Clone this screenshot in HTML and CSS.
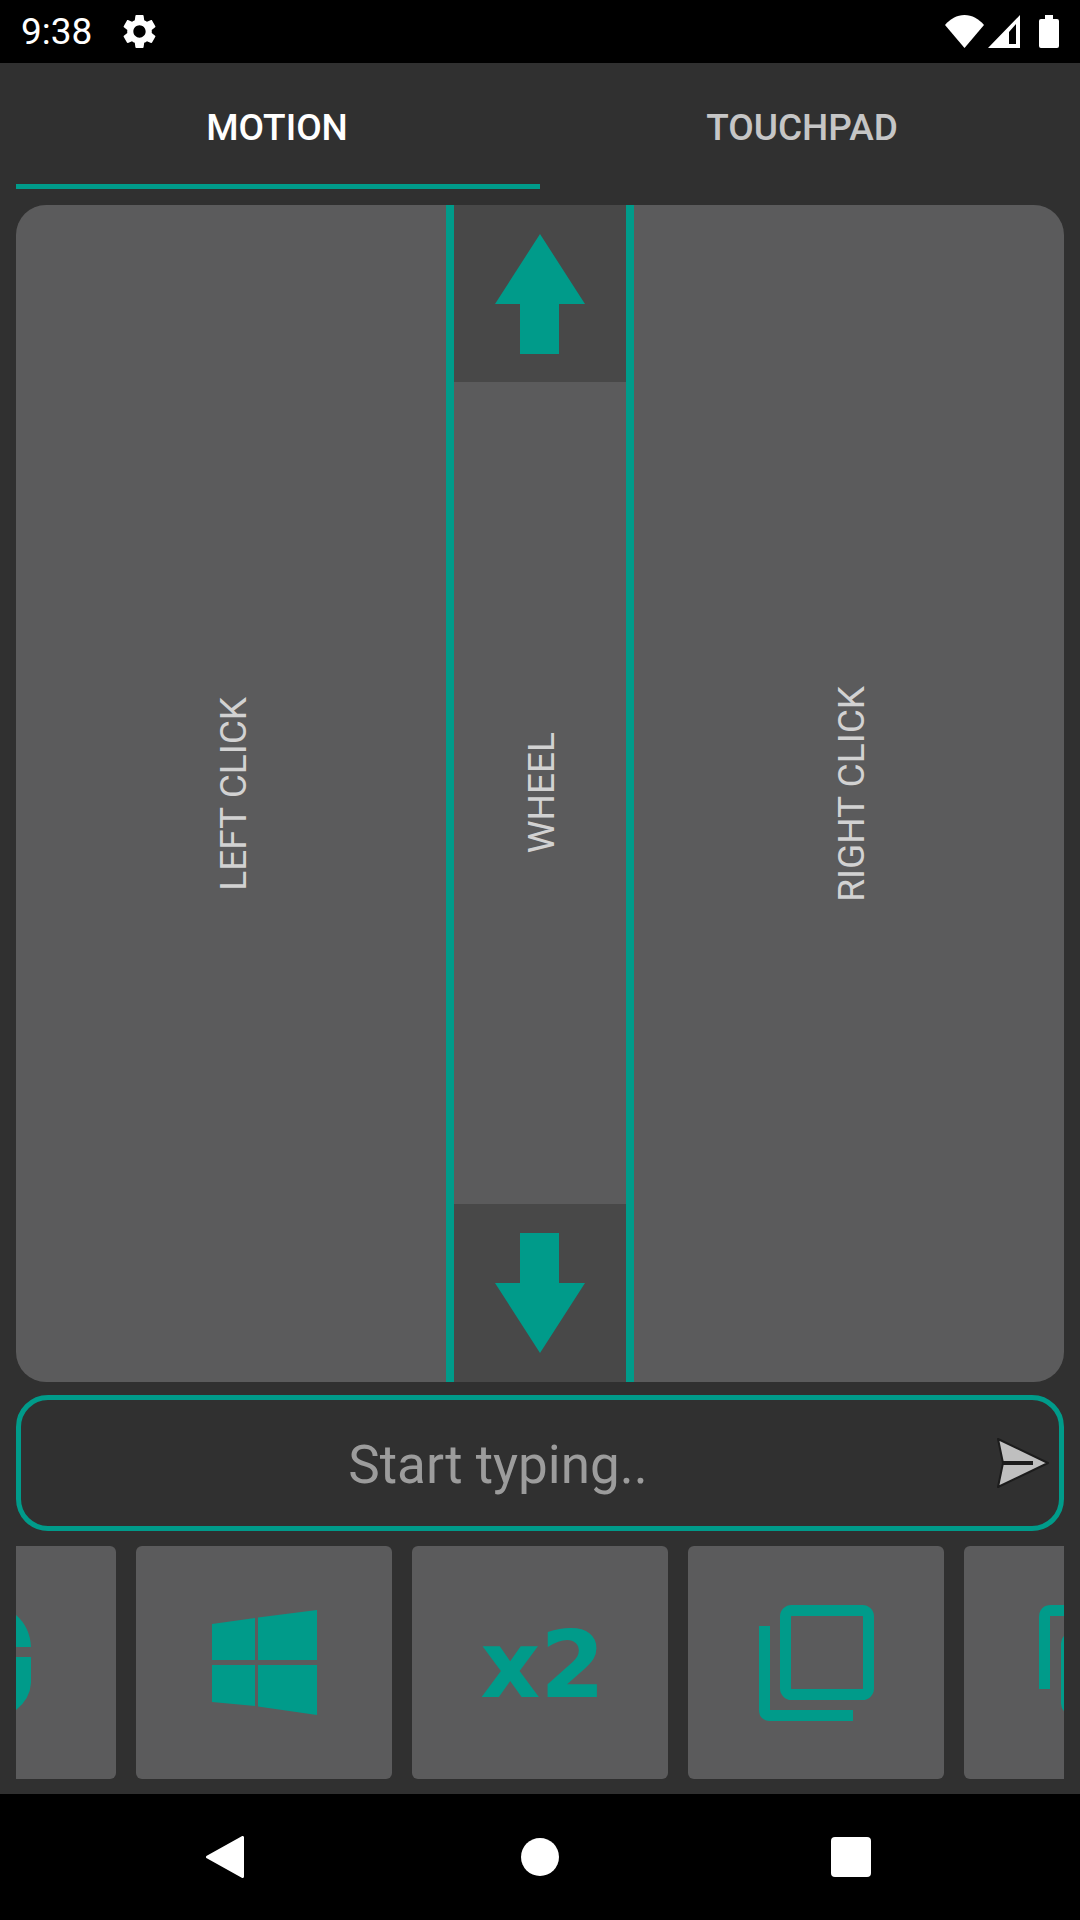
FILE: index.html
```html
<!DOCTYPE html>
<html lang="en">
<head>
  <meta charset="UTF-8" />
  <meta name="viewport" content="width=device-width, initial-scale=1.0" />
  <title>Remote Mouse</title>
  <link rel="stylesheet" href="styles.css">
</head>
<body>
  <header class="status-bar">
    <span class="clock">9:38</span>
    <svg class="gear" viewBox="0 0 24 24"><path fill="#fff" d="M19.14 12.94c.04-.3.06-.61.06-.94 0-.32-.02-.64-.07-.94l2.03-1.58c.18-.14.23-.41.12-.61l-1.92-3.32c-.12-.22-.37-.29-.59-.22l-2.39.96c-.5-.38-1.03-.7-1.62-.94l-.36-2.54c-.04-.24-.24-.41-.48-.41h-3.84c-.24 0-.43.17-.47.41l-.36 2.54c-.59.24-1.13.57-1.62.94l-2.39-.96c-.22-.08-.47 0-.59.22L2.74 8.87c-.12.21-.08.47.12.61l2.03 1.58c-.05.3-.09.63-.09.94s.02.64.07.94l-2.03 1.58c-.18.14-.23.41-.12.61l1.92 3.32c.12.22.37.29.59.22l2.39-.96c.5.38 1.03.7 1.62.94l.36 2.54c.05.24.24.41.48.41h3.84c.24 0 .44-.17.47-.41l.36-2.54c.59-.24 1.13-.56 1.62-.94l2.39.96c.22.08.47 0 .59-.22l1.92-3.32c.12-.22.07-.47-.12-.61l-2.01-1.58zM12 15.6c-1.98 0-3.6-1.62-3.6-3.6s1.62-3.6 3.6-3.6 3.6 1.62 3.6 3.6-1.62 3.6-3.6 3.6z"/></svg>
    <div class="status-icons">
      <svg class="wifi" width="39" height="33" viewBox="0 0 39 33"><path fill="#fff" d="M19.5 33 0 10C5 4 12 0 19.5 0S34 4 39 10z"/></svg>
      <svg class="signal" width="32" height="33" viewBox="0 0 32 33"><path fill="#fff" fill-rule="evenodd" d="M0 33 32 0v33zM21 29h7V9l-7 8z"/></svg>
      <svg class="battery" width="20" height="33" viewBox="0 0 20 33"><path fill="#fff" d="M6 0h8v4h4q2 0 2 2v25q0 2-2 2H2q-2 0-2-2V6q0-2 2-2h4z"/></svg>
    </div>
  </header>

  <nav class="tabs">
    <div class="tab active">MOTION</div>
    <div class="tab">TOUCHPAD</div>
  </nav>

  <div class="main-content">
    <section class="pad">
      <div class="click-zone"><span class="side-label">LEFT CLICK</span></div>
      <div class="wheel">
        <div class="wheel-btn">
          <svg width="90" height="120" viewBox="0 0 90 120"><path fill="#009b8a" d="M45 0 90 70H64V120H25V70H0z"/></svg>
        </div>
        <div class="wheel-middle"><span class="side-label">WHEEL</span></div>
        <div class="wheel-btn wheel-btn-down">
          <svg width="90" height="120" viewBox="0 0 90 120"><path fill="#009b8a" d="M25 0H64V50H90L45 120 0 50H25z"/></svg>
        </div>
      </div>
      <div class="click-zone"><span class="side-label">RIGHT CLICK</span></div>
    </section>

    <div class="type-box">
      <span class="placeholder">Start typing..</span>
      <svg class="send" width="56" height="54" viewBox="0 0 56 54">
        <path fill="#bfbfbf" stroke="#1c1c1c" stroke-width="2" stroke-linejoin="round" d="M3 3 53 27 3 51 8 27z"/>
        <path stroke="#1c1c1c" stroke-width="4" d="M8 27H38"/>
      </svg>
    </div>

    <div class="keys">
      <div class="key first-key">
        <svg width="96" height="96" viewBox="0 0 96 96"><path fill="#009b8a" d="M5 32Q6 12 20 0H76Q90 12 91 32zM5 42H91V68Q90 84 76 95H20Q6 84 5 68z"/></svg>
      </div>
      <div class="key">
        <svg width="105" height="105" viewBox="0 0 105 105"><path fill="#009b8a" d="M0 14 43 8V50H0zM46 7.5 105 0V50H46zM0 55H43V96L0 92zM46 55H105V105L46 96.5z"/></svg>
      </div>
      <div class="key"><span class="double">x2</span></div>
      <div class="key">
        <svg width="115" height="116" viewBox="0 0 115 116" fill="none" stroke="#009b8a" stroke-width="11" stroke-linejoin="round">
          <rect x="26.500" y="5.500" width="83" height="84" rx="6"/>
          <path d="M5.500 21V105Q5.500 110.500 11 110.500H94"/>
        </svg>
      </div>
      <div class="key key-paste">
        <svg width="106" height="116" viewBox="0 0 106 116" fill="none" stroke="#009b8a" stroke-width="11" stroke-linejoin="round">
          <path d="M5.500 84V12Q5.500 5.500 12 5.500H80"/>
          <rect x="27.500" y="32.500" width="69" height="72" rx="6"/>
        </svg>
      </div>
    </div>
  </div>

  <footer class="nav-bar">
    <svg class="nav-back" width="38" height="42" viewBox="0 0 38 42"><path fill="#fff" stroke="#fff" stroke-width="3" stroke-linejoin="round" d="M36.500 1.500V40.500L1.500 21z"/></svg>
    <svg width="38" height="38" viewBox="0 0 38 38"><circle cx="19" cy="19" r="19" fill="#fff"/></svg>
    <svg width="40" height="40" viewBox="0 0 40 40"><rect width="40" height="40" rx="4" fill="#fff"/></svg>
  </footer>
</body>
</html>
```

FILE: styles.css
```css
body {
  margin: 0;
  height: 1920px;
  overflow: hidden;
  display: flex;
  flex-direction: column;
  background-color: #303030;
  font-family: 'Roboto', sans-serif;
}

.status-bar {
  height: 63px;
  flex-shrink: 0;
  background-color: #000;
  color: #fff;
  display: flex;
  align-items: center;
  padding: 0 21px;
}

.clock {
  font-size: 37px;
}

.gear {
  width: 41px;
  height: 41px;
  margin-left: 27px;
}

.status-icons {
  margin-left: auto;
  display: flex;
  align-items: center;
}

.signal {
  margin-left: 4px;
}

.battery {
  margin-left: 19px;
}

.tabs {
  height: 126px;
  flex-shrink: 0;
  padding: 0 16px;
  display: flex;
}

.tab {
  flex: 0 0 50%;
  box-sizing: border-box;
  display: flex;
  align-items: center;
  justify-content: center;
  padding-top: 8px;
  border-bottom: 5px solid transparent;
  font-size: 37px;
  font-weight: 500;
  color: #c6c6c6;
}

.tab.active {
  color: #fff;
  padding-right: 2px;
  border-bottom-color: #009b8a;
}

.main-content {
  flex: 1;
  min-height: 0;
  display: flex;
  flex-direction: column;
  padding: 16px 16px 15px;
}

.pad {
  flex: 1;
  min-height: 0;
  display: flex;
  background-color: #5b5b5c;
  border-radius: 30px;
  overflow: hidden;
}

.click-zone {
  flex: 1;
  display: flex;
  align-items: center;
  justify-content: center;
  padding-left: 5px;
}

.side-label {
  writing-mode: vertical-rl;
  transform: rotate(180deg);
  font-size: 37px;
  color: #d2d2d2;
}

.wheel {
  width: 172px;
  display: flex;
  flex-direction: column;
  border-left: 8px solid #009b8a;
  border-right: 8px solid #009b8a;
}

.wheel-btn {
  height: 177px;
  flex-shrink: 0;
  background-color: #484848;
  display: flex;
  align-items: center;
  justify-content: center;
}

.wheel-btn-down {
  height: 178px;
}

.wheel-middle {
  flex: 1;
  display: flex;
  align-items: center;
  justify-content: center;
  padding-left: 2px;
}

.type-box {
  height: 136px;
  flex-shrink: 0;
  box-sizing: border-box;
  margin-top: 13px;
  padding: 0 8px 0 0;
  border: 5px solid #009b8a;
  border-radius: 32px;
  display: flex;
  align-items: center;
}

.placeholder {
  flex: 1;
  text-align: center;
  padding: 4px 0 0 2px;
  font-size: 53px;
  color: #9c9c9c;
}

.send {
  margin-left: 22px;
}

.keys {
  height: 233px;
  flex-shrink: 0;
  margin-top: 15px;
  display: flex;
  gap: 20px;
  overflow: hidden;
}

.key {
  width: 256px;
  flex-shrink: 0;
  background-color: #5b5b5c;
  border-radius: 6px;
  display: flex;
  align-items: center;
  justify-content: center;
}

/* row is scrolled sideways, first and last key are cut off */
.first-key {
  margin-left: -156px;
}

.key-paste {
  justify-content: flex-start;
  padding-left: 75px;
  box-sizing: border-box;
}

.double {
  font-family: 'DejaVu Sans', sans-serif;
  font-weight: 700;
  font-size: 93px;
  padding: 5px 0 0 5px;
  color: #009b8a;
}

.nav-bar {
  height: 126px;
  flex-shrink: 0;
  background-color: #000;
  display: flex;
  align-items: center;
  justify-content: space-between;
  padding: 0 209px 0 206px;
  box-sizing: border-box;
}

.nav-back {
  margin-right: 5px;
}
```
